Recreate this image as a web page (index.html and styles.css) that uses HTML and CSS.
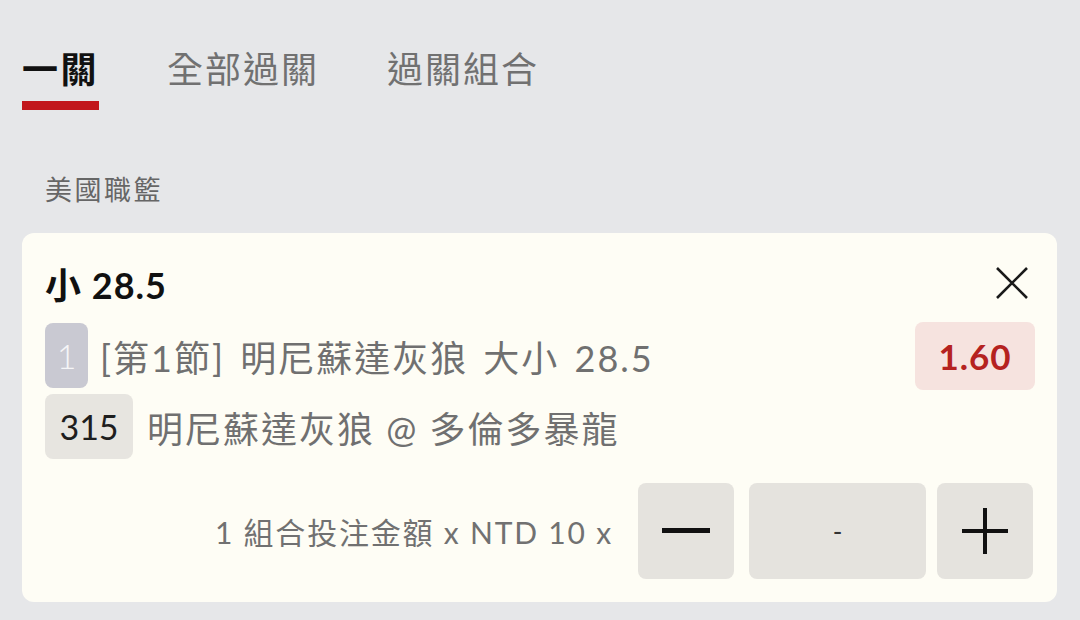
FILE: index.html
```html
<!DOCTYPE html>
<html lang="zh-Hant">
<head>
    <meta charset="UTF-8">
    <meta name="viewport" content="width=device-width, initial-scale=1.0">
    <title>投注單</title>
    <link rel="stylesheet" href="styles.css">
</head>
<body>
    <!-- 分頁 -->
    <div class="tabs">
        <div class="tab active">一關</div>
        <div class="tab">全部過關</div>
        <div class="tab">過關組合</div>
    </div>

    <div class="league">美國職籃</div>

    <!-- 注單 -->
    <div class="bet-card">
        <div class="bet-head">
            <div class="bet-title">小 28.5</div>
            <button class="close-btn" aria-label="關閉">
                <svg width="34" height="34" viewBox="0 0 34 34">
                    <path d="M2 2 L32 32 M32 2 L2 32" stroke="#1a1a1a" stroke-width="2.6" fill="none"/>
                </svg>
            </button>
        </div>

        <div class="bet-row">
            <span class="tag tag-period">1</span>
            <span class="bet-text market">[第1節] 明尼蘇達灰狼 大小 28.5</span>
            <span class="odds">1.60</span>
        </div>

        <div class="bet-row match">
            <span class="tag tag-id">315</span>
            <span class="bet-text">明尼蘇達灰狼 @ 多倫多暴龍</span>
        </div>

        <div class="stake">
            <span class="stake-text">1 組合投注金額 x NTD 10 x</span>
            <button class="step-btn">
                <svg width="48" height="8" viewBox="0 0 48 8"><rect x="0" y="1" width="48" height="5" fill="#111"/></svg>
            </button>
            <div class="stake-input">-</div>
            <button class="step-btn">
                <svg width="48" height="48" viewBox="0 0 48 48"><path d="M24 1 V47 M1 24 H47" stroke="#111" stroke-width="4" fill="none"/></svg>
            </button>
        </div>
    </div>
</body>
</html>
```

FILE: styles.css
```css
body {
    margin: 0;
    padding: 0;
    background: #e6e7e9;
    font-family: Lato, "Noto Sans CJK TC", sans-serif;
    color: #707070;
}

.tabs {
    display: flex;
    align-items: flex-start;
    gap: 68px;
    padding-left: 22px;
}

.tab {
    padding-top: 48px;
    font-size: 36px;
    line-height: 42px;
    letter-spacing: 2px;
    color: #717171;
}

.tab.active {
    color: #111;
    font-weight: 700;
    letter-spacing: 2.5px;
}

.tab.active::after {
    content: "";
    display: block;
    height: 9px;
    margin-top: 11px;
    background: #c2161c;
}

.league {
    margin: 64px 0 0 45px;
    font-size: 27px;
    line-height: 32px;
    letter-spacing: 2.5px;
    color: #666;
}

.bet-card {
    margin: 27px 23px 0 22px;
    padding: 28px 22px 23px 23px;
    background: #fefdf5;
    border-radius: 12px;
}

.bet-head {
    display: flex;
    justify-content: space-between;
    align-items: center;
    height: 44px;
}

.bet-title {
    font-size: 36px;
    font-weight: 700;
    letter-spacing: 1px;
    color: #111;
}

.close-btn {
    background: none;
    border: none;
    padding: 0;
    margin-right: 6px;
    display: flex;
    cursor: pointer;
}

.bet-row {
    display: flex;
    align-items: center;
    margin-top: 16px;
    min-height: 69px;
}

.bet-row.match {
    margin-top: 4px;
    min-height: 65px;
}

.tag {
    display: flex;
    align-items: center;
    justify-content: center;
    height: 65px;
    border-radius: 8px;
    font-size: 34px;
}

.tag-period {
    width: 43px;
    background: #c9c9d2;
    color: #f5f5f7;
    font-weight: 300;
}

.tag-id {
    width: 88px;
    background: #e7e5e0;
    color: #1e1e1e;
}

.bet-text {
    flex: 1;
    margin-left: 12px;
    font-size: 36px;
    letter-spacing: 2px;
    color: #707070;
}

.bet-text.market {
    word-spacing: 4px;
}

.match .bet-text {
    margin-left: 14px;
}

.odds {
    display: flex;
    align-items: center;
    justify-content: center;
    width: 120px;
    height: 68px;
    border-radius: 8px;
    background: #f6e3df;
    color: #b5221f;
    font-size: 35px;
    font-weight: 700;
    letter-spacing: 1px;
}

.stake {
    display: flex;
    align-items: center;
    justify-content: flex-end;
    margin: 24px 2px 0 0;
}

.stake-text {
    margin-right: 25px;
    font-size: 30px;
    letter-spacing: 1.8px;
    color: #717171;
}

.step-btn {
    display: flex;
    align-items: center;
    justify-content: center;
    width: 96px;
    height: 96px;
    padding: 0;
    border: none;
    border-radius: 8px;
    background: #e5e3de;
    cursor: pointer;
}

.stake-input {
    display: flex;
    align-items: center;
    justify-content: center;
    width: 177px;
    height: 96px;
    margin: 0 11px 0 15px;
    border-radius: 8px;
    background: #e5e3de;
    font-size: 26px;
    color: #333;
}
```
